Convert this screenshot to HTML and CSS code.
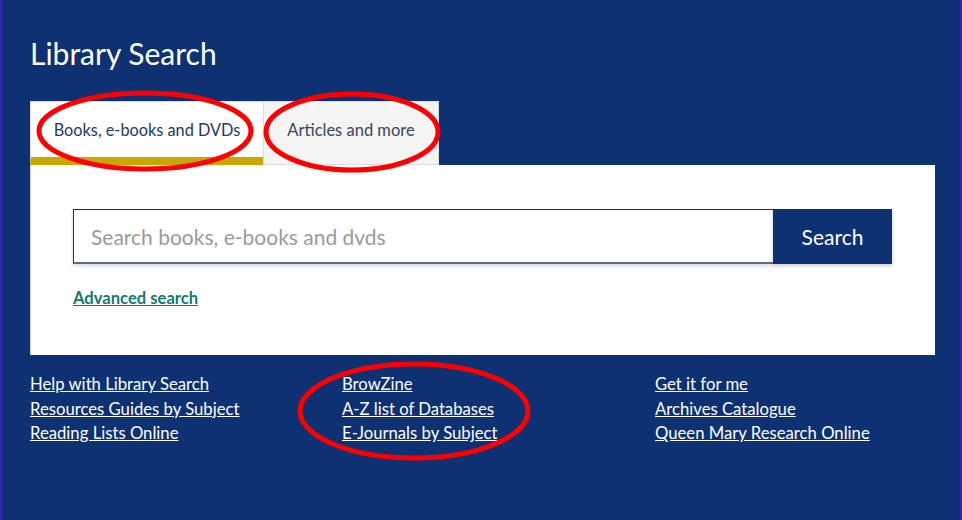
FILE: index.html
```html
<!DOCTYPE html>
<html lang="en">
<head>
    <meta charset="UTF-8" />
    <meta name="viewport" content="width=device-width, initial-scale=1" />
    <title>Library Search</title>
    <link rel="stylesheet" href="styles.css">
</head>
<body>
    <div class="page">
        <h1 class="title">Library Search</h1>

        <div class="tabs">
            <button class="tab active">Books, e-books and DVDs</button>
            <button class="tab">Articles and more</button>
        </div>

        <div class="panel">
            <form class="search-row">
                <input type="text" class="search-input" placeholder="Search books, e-books and dvds" />
                <button type="submit" class="search-btn">Search</button>
            </form>
            <a href="#" class="advanced">Advanced search</a>
        </div>

        <div class="links">
            <ul>
                <li><a href="#">Help with Library Search</a></li>
                <li><a href="#">Resources Guides by Subject</a></li>
                <li><a href="#">Reading Lists Online</a></li>
            </ul>
            <ul>
                <li><a href="#">BrowZine</a></li>
                <li><a href="#">A-Z list of Databases</a></li>
                <li><a href="#">E-Journals by Subject</a></li>
            </ul>
            <ul>
                <li><a href="#">Get it for me</a></li>
                <li><a href="#">Archives Catalogue</a></li>
                <li><a href="#">Queen Mary Research Online</a></li>
            </ul>
        </div>

        <!-- annotation marks drawn over the screenshot -->
        <svg class="marks" width="962" height="520" viewBox="0 0 962 520">
            <ellipse cx="145" cy="131" rx="106" ry="38" />
            <ellipse cx="352" cy="132" rx="86" ry="38" />
            <ellipse cx="414" cy="411" rx="114" ry="47" />
        </svg>
    </div>
</body>
</html>
```

FILE: styles.css
```css
html, body {
    margin: 0;
    height: 100%;
}
body {
    font-family: Lato, "Liberation Sans", sans-serif;
    background-color: #0d3173;
    overflow: hidden;
}
.page {
    position: relative;
    height: 520px;
    box-sizing: border-box;
    border-left: 2px solid #3a22b8;
    border-right: 2px solid #3a22b8;
    padding: 35px 25px 0 28px;
}
.title {
    margin: 0 0 30px;
    font-size: 30px;
    line-height: 36px;
    font-weight: 400;
    color: #fff;
}
.tabs {
    display: flex;
}
.tab {
    font-family: inherit;
    font-size: 16.5px;
    height: 64px;
    padding: 0 20px;
    border: 1px solid #dcdcdc;
    border-bottom: 1px solid #dcdcdc;
    background: #f4f4f4;
    color: #3b4658;
    cursor: pointer;
}
.tab.active {
    width: 233px;
    font-size: 16.3px;
    background: #fff;
    color: #233a6b;
    border-bottom: 8px solid #c9a600;
    border-right: none;
}
.tab + .tab {
    width: 176px;
    padding-bottom: 6px;
}
.panel {
    background: #fff;
    border-left: 1px solid #c9cfdb;
    padding: 44px 43px 0 42px;
    height: 190px;
    box-sizing: border-box;
}
.search-row {
    display: flex;
    margin: 0;
}
.search-input {
    flex: 1;
    height: 55px;
    box-sizing: border-box;
    border: 1px solid #12336a;
    border-bottom: 2px solid #5a6f8f;
    border-right: none;
    padding: 0 17px;
    font-family: inherit;
    font-size: 21px;
    box-shadow: 0 2px 4px rgba(0, 0, 0, 0.15);
    outline: none;
}
.search-input::placeholder {
    color: #9a9a9a;
}
.search-btn {
    width: 119px;
    height: 55px;
    border: none;
    background: #0d3173;
    color: #fff;
    font-family: inherit;
    font-size: 21px;
    box-shadow: 0 2px 4px rgba(0, 0, 0, 0.2);
    cursor: pointer;
}
.advanced {
    display: inline-block;
    margin-top: 24px;
    font-size: 16.6px;
    font-weight: 700;
    color: #137a6c;
}
.links {
    display: grid;
    grid-template-columns: 312px 313px 1fr;
    margin-top: 17px;
}
.links ul {
    list-style: none;
    margin: 0;
    padding: 0;
}
.links li {
    line-height: 24.5px;
    font-size: 16.7px;
}
.links a {
    color: #fff;
}
.marks {
    position: absolute;
    left: -2px;
    top: 0;
    pointer-events: none;
}
.marks ellipse {
    fill: none;
    stroke: #f00;
    stroke-width: 5;
}
```
